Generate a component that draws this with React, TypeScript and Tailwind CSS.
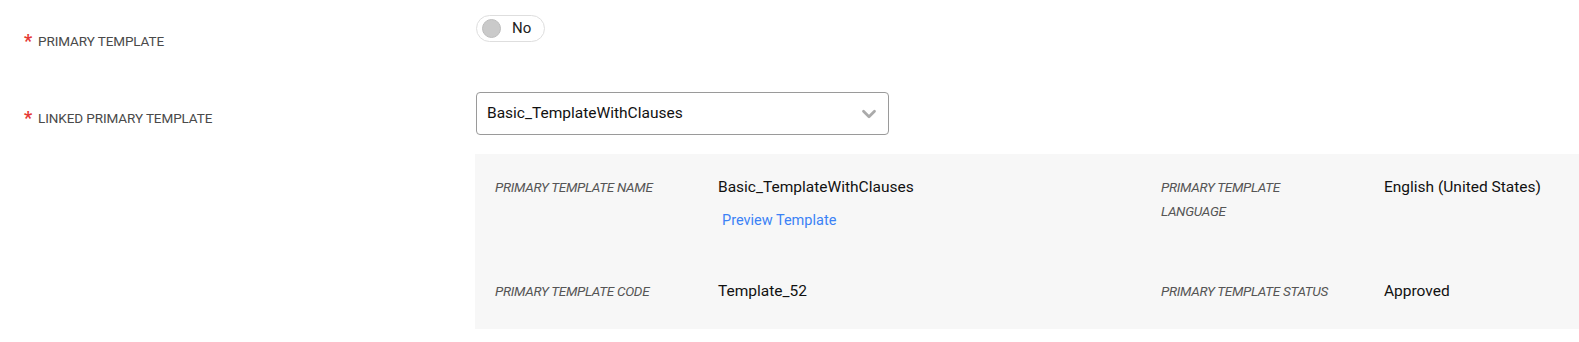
import { ChevronDown } from 'lucide-react';

const font = { fontFamily: 'Roboto, "Liberation Sans", sans-serif' };

function Label({ text }: { text: string }) {
  return (
    <div className="flex items-center gap-[6px] text-[13.5px] leading-5 text-[#4a4a4a] tracking-[-0.1px]">
      <span className="text-[#e53935] text-[18px] leading-5 font-bold">*</span>
      <span>{text}</span>
    </div>
  );
}

function DetailLabel({ children }: { children: React.ReactNode }) {
  return <div className="text-[13.5px] italic leading-6 text-[#555] tracking-[-0.3px]">{children}</div>;
}

function DetailValue({ children }: { children: React.ReactNode }) {
  return <div className="text-[15.5px] leading-6 text-[#111]">{children}</div>;
}

export default function App() {
  return (
    <main className="w-[1579px] h-[342px] bg-white pt-[15px]" style={font}>
      {/* primary template toggle */}
      <div className="flex">
        <div className="w-[474px] pl-[24px] pt-[16px]">
          <Label text="PRIMARY TEMPLATE" />
        </div>
        <div className="ml-[2px] flex items-center h-[27px] w-[69px] rounded-full border border-[#dedede] bg-white pl-[5px] gap-[11px]">
          <span className="w-[19px] h-[19px] rounded-full bg-[#cacaca] border border-[#bdbdbd]" />
          <span className="text-[15px] text-[#222]">No</span>
        </div>
      </div>

      {/* linked primary template select */}
      <div className="flex mt-[41px]">
        <div className="w-[474px] pl-[24px] pt-[16px]">
          <Label text="LINKED PRIMARY TEMPLATE" />
        </div>
        <div className="ml-[2px] flex items-center justify-between w-[413px] h-[43px] rounded-[4px] border border-[#9a9a9a] pl-[10px] pr-[8px]">
          <span className="text-[15.5px] text-[#111]">Basic_TemplateWithClauses</span>
          <ChevronDown size={22} strokeWidth={3} className="text-[#aaa]" />
        </div>
      </div>

      {/* template details */}
      <div className="ml-[475px] mt-[19px] bg-[#f7f7f7] pl-[20px] pt-[21px] pb-[26px] grid grid-cols-[223px_443px_223px_1fr] gap-y-[46px]">
        <DetailLabel>PRIMARY TEMPLATE NAME</DetailLabel>
        <div>
          <DetailValue>Basic_TemplateWithClauses</DetailValue>
          <a className="block mt-[10px] ml-[4px] text-[14.5px] leading-6 text-[#3b82f6]">Preview Template</a>
        </div>
        <DetailLabel>
          PRIMARY TEMPLATE
          <br />
          LANGUAGE
        </DetailLabel>
        <DetailValue>English (United States)</DetailValue>

        <DetailLabel>PRIMARY TEMPLATE CODE</DetailLabel>
        <DetailValue>Template_52</DetailValue>
        <DetailLabel>PRIMARY TEMPLATE STATUS</DetailLabel>
        <DetailValue>Approved</DetailValue>
      </div>
    </main>
  );
}
